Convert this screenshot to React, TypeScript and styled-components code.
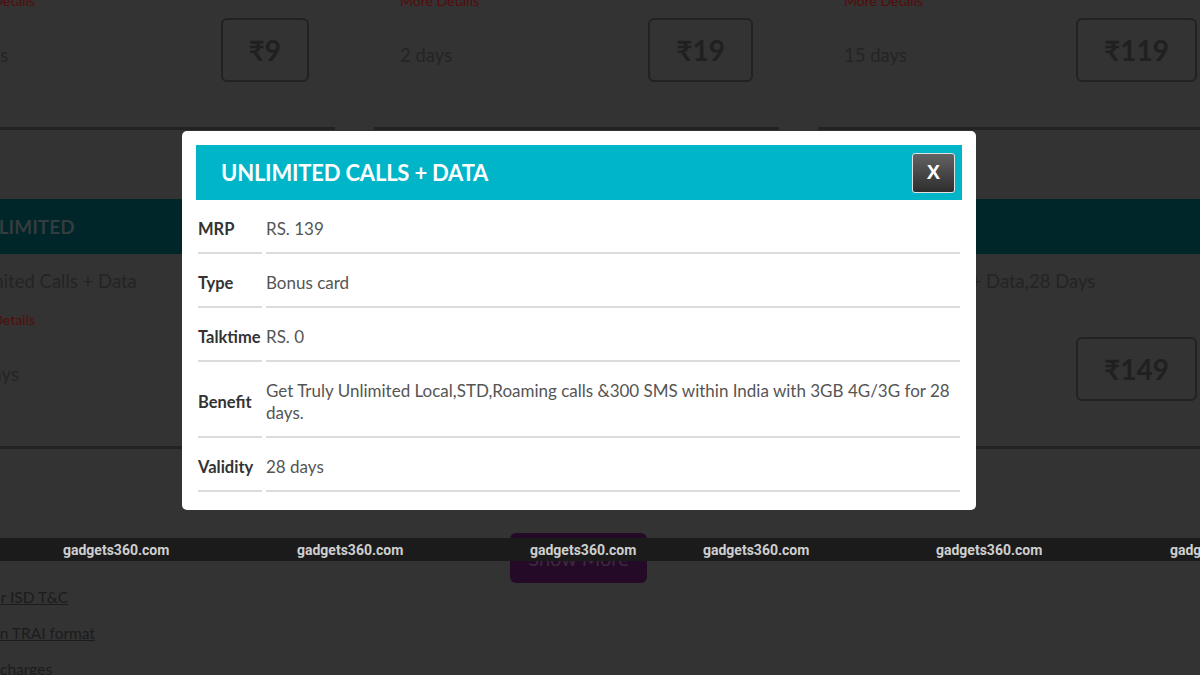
import React from 'react';
import styled, { createGlobalStyle } from 'styled-components';

const GlobalStyle = createGlobalStyle`
  html, body {
    margin: 0;
    padding: 0;
    height: 100%;
    overflow: hidden;
  }
  body {
    background: #333333;
    font-family: Lato, "Noto Sans", sans-serif;
  }
  * {
    box-sizing: border-box;
  }
`;

type Plan = { title: string; validity: string; price: string };

const topPlans: Plan[] = [
  { title: 'Unlimited Calls', validity: '1 days', price: '₹9' },
  { title: 'Unlimited Calls + Data', validity: '2 days', price: '₹19' },
  { title: 'Unlimited Calls + Data', validity: '15 days', price: '₹119' },
];

const unlimitedPlans: Plan[] = [
  { title: 'Unlimited Calls + Data', validity: '28 days', price: '₹139' },
  { title: 'Unlimited Calls + Data', validity: '28 days', price: '₹145' },
  { title: 'Unlimited Calls + Data,28 Days', validity: '28 days', price: '₹149' },
];

const details = [
  { label: 'MRP', value: 'RS. 139' },
  { label: 'Type', value: 'Bonus card' },
  { label: 'Talktime', value: 'RS. 0' },
  {
    label: 'Benefit',
    value: 'Get Truly Unlimited Local,STD,Roaming calls &300 SMS within India with 3GB 4G/3G for 28 days.',
  },
  { label: 'Validity', value: '28 days' },
];

// left offset of each watermark text, measured from the previous one
const watermarks = [63, 127, 126, 66, 126, 127];

const App: React.FC = () => {
  return (
    <Page>
      <GlobalStyle />
      <Content>
        <PlanGrid>
          {topPlans.map((p) => (
            <PlanCard key={p.price} plan={p} />
          ))}
        </PlanGrid>

        <CategoryBar>UNLIMITED</CategoryBar>

        <PlanGrid>
          {unlimitedPlans.map((p) => (
            <PlanCard key={p.price} plan={p} />
          ))}
        </PlanGrid>

        <ShowMore>Show More</ShowMore>

        <LinkList>
          <FooterLink>Info for ISD T&amp;C</FooterLink>
          <FooterLink>Plans in TRAI format</FooterLink>
          <FooterLink>Other charges</FooterLink>
        </LinkList>
      </Content>

      <Watermark>
        {watermarks.map((lead, i) => (
          <WatermarkText key={i} $lead={lead}>
            gadgets360.com
          </WatermarkText>
        ))}
      </Watermark>

      <Modal>
        <ModalHeader>
          <ModalTitle>UNLIMITED CALLS + DATA</ModalTitle>
          <CloseButton>X</CloseButton>
        </ModalHeader>
        <DetailTable>
          {details.map((d) => (
            <React.Fragment key={d.label}>
              <DetailLabel>{d.label}</DetailLabel>
              <DetailValue>{d.value}</DetailValue>
            </React.Fragment>
          ))}
        </DetailTable>
      </Modal>
    </Page>
  );
};

const PlanCard: React.FC<{ plan: Plan }> = ({ plan }) => (
  <Card>
    <CardTitle>{plan.title}</CardTitle>
    <MoreDetails>More Details</MoreDetails>
    <PriceRow>
      <Validity>{plan.validity}</Validity>
      <PriceBox>{plan.price}</PriceBox>
    </PriceRow>
  </Card>
);

export default App;

const Page = styled.div`
  position: relative;
  height: 100vh;
  overflow: hidden;
  background: #333333;
`;

const Content = styled.div`
  width: 1297px;
  margin: -65px 0 0 -70px;
`;

const PlanGrid = styled.div`
  display: grid;
  grid-template-columns: repeat(3, 405px);
  column-gap: 39px;
`;

const Card = styled.div`
  display: flex;
  flex-direction: column;
  padding: 14px 26px 45px;
  border-bottom: 3px solid #222222;
`;

const CardTitle = styled.div`
  font-size: 18.5px;
  line-height: 26px;
  color: #242424;
  white-space: nowrap;
`;

const MoreDetails = styled.a`
  margin-top: 16px;
  font-size: 14px;
  line-height: 20px;
  color: #560b0b;
`;

const PriceRow = styled.div`
  display: flex;
  align-items: center;
  justify-content: space-between;
  margin-top: 7px;
`;

const Validity = styled.span`
  padding-top: 10px;
  font-size: 18.5px;
  line-height: 26px;
  color: #242424;
`;

const PriceBox = styled.div`
  display: flex;
  align-items: center;
  justify-content: center;
  height: 64px;
  padding: 0 26px;
  border: 2px solid #222222;
  border-radius: 6px;
  font-size: 28px;
  font-weight: 700;
  color: #202020;
`;

const CategoryBar = styled.div`
  display: flex;
  align-items: center;
  height: 55px;
  margin-top: 69px;
  padding-left: 40px;
  background: #00262a;
  font-size: 19px;
  font-weight: 700;
  color: #333c3e;
`;

const ShowMore = styled.button`
  display: block;
  width: 137px;
  height: 50px;
  margin: 84px auto 0;
  border: none;
  border-radius: 6px;
  background: #250a28;
  font-family: Lato, "Noto Sans", sans-serif;
  font-size: 20px;
  color: #3b2a40;
`;

const LinkList = styled.div`
  display: flex;
  flex-direction: column;
  align-items: flex-start;
  margin-top: -4px;
  padding-left: 26px;
`;

const FooterLink = styled.a`
  font-size: 15.5px;
  line-height: 36px;
  color: #1c1c1c;
  text-decoration: underline;
  white-space: nowrap;
`;

const Watermark = styled.div`
  position: absolute;
  top: 538px;
  left: 0;
  right: 0;
  display: flex;
  align-items: center;
  height: 23px;
  background: #1b1b1b;
  overflow: hidden;
`;

const WatermarkText = styled.span<{ $lead: number }>`
  flex: none;
  width: 107px;
  margin-left: ${(p) => p.$lead}px;
  font-family: Roboto, "Liberation Sans", sans-serif;
  font-size: 14px;
  font-weight: 700;
  color: #cfcfcf;
  white-space: nowrap;
`;

const Modal = styled.div`
  position: fixed;
  top: 131px;
  left: 182px;
  width: 794px;
  padding: 14px 14px 18px;
  background: #ffffff;
  border-radius: 5px;
`;

const ModalHeader = styled.div`
  display: flex;
  align-items: center;
  justify-content: space-between;
  height: 55px;
  padding: 0 7px 0 25px;
  background: #00b5c8;
`;

const ModalTitle = styled.h2`
  margin: 0;
  font-size: 22px;
  font-weight: 700;
  color: #ffffff;
  letter-spacing: -0.2px;
`;

const CloseButton = styled.button`
  width: 43px;
  height: 40px;
  padding: 0;
  border: 1px solid #e2e2e2;
  border-radius: 3px;
  background: linear-gradient(#636363, #2d2d2d);
  font-family: "Liberation Sans", Arial, sans-serif;
  font-size: 20px;
  font-weight: 700;
  color: #ffffff;
`;

const DetailTable = styled.div`
  display: grid;
  grid-template-columns: 64px 1fr;
  column-gap: 4px;
  padding: 0 2px;
`;

const DetailCell = styled.div`
  padding: 18px 0 12px;
  border-bottom: 2px solid #dcdcdc;
  line-height: 22px;
`;

const DetailLabel = styled(DetailCell)`
  display: flex;
  align-items: center;
  font-size: 16.5px;
  font-weight: 700;
  color: #333333;
  white-space: nowrap;
`;

const DetailValue = styled(DetailCell)`
  font-size: 17px;
  color: #555555;
`;
